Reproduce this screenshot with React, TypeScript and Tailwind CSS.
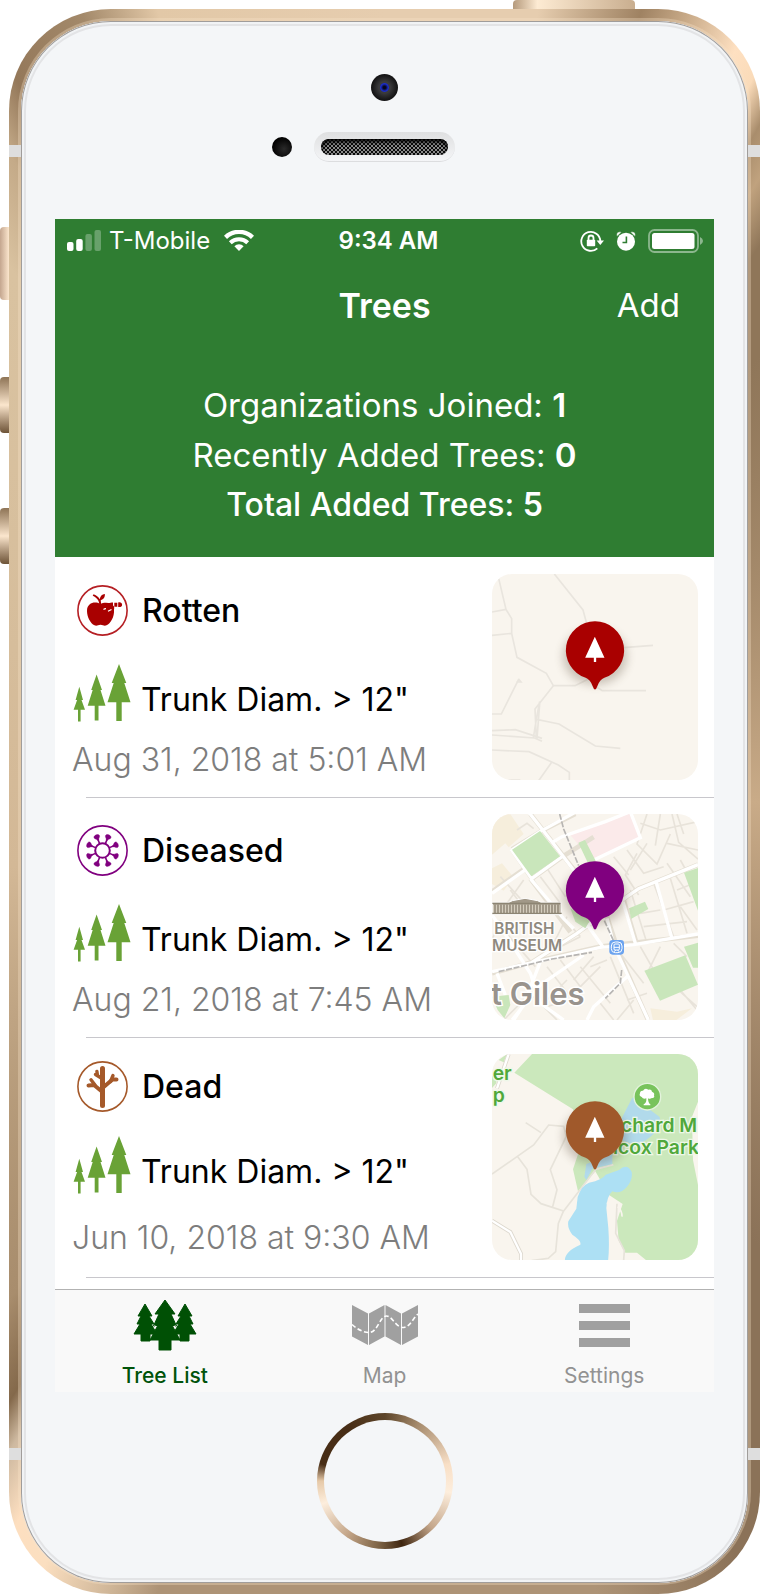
import type { ReactNode } from "react";

type Tree = {
  status: string;
  icon: ReactNode;
  date: string;
  color: string;
  map: ReactNode;
  top: string;
  trunkGap: string;
  dateGap: string;
};

const GREEN = "#69a236";

/* ---------- row icons ---------- */

function RottenIcon() {
  return (
    <svg viewBox="0 0 51 51" className="size-[51px]" fill="#a90000" aria-hidden="true">
      <circle cx="25.5" cy="25.5" r="24.6" fill="#fff" stroke="#b51f24" strokeWidth="1.6" />
      <path d="M23 19C18.500 16 10 17.500 10 26c0 6 3.500 12.500 7.500 14.300 2.500 1 3.500-.6 6-.6s3.500 1.600 6 .6C33.500 38.500 37.500 32 37 25c0-1 .500-2 0-3.500C35 17.500 28 16.500 23 19z" />
      <path d="M22.200 19.500c0-4-2-6.500-6.500-8.800l.9-1.400c3 1.300 5.300 3 6.100 5 .5-3 2.200-5.100 5.200-5.300.3 3-1.200 5.400-4.200 6.200.3 1.500.4 3 .3 4.300z" />
      <path d="M31 18.500c2-1 3.500-1 5-1v4.700l-4 .5zM37.300 17.700h3v4h-3zM41.200 17.500c2.500-.5 3.900.5 3.900 2.200s-1.400 2.700-3.900 2.300z" />
      <path d="M26.500 24.500q1-.8 2.500-.8M31 26.200l3.500-1.700" fill="none" stroke="#fff" strokeWidth="1.200" />
    </svg>
  );
}

function DiseasedIcon() {
  const arms = [22.5, 67.5, 112.5, 157.5, 202.5, 247.5, 292.5, 337.5];
  return (
    <svg viewBox="0 0 51 51" className="size-[51px]" fill="none" stroke="#80007f" aria-hidden="true">
      <circle cx="25.5" cy="25.5" r="24.6" fill="#fff" strokeWidth="1.6" />
      <circle cx="25.5" cy="25.5" r="7.3" strokeWidth="2" />
      {arms.map((a) => (
        <g key={a} transform={`rotate(${a} 25.5 25.5)`}>
          <path d="M25.500 18v-5" strokeWidth="1.600" />
          <path d="M22.600 10.500c0-2.400 5.800-2.400 5.800 0 0 1.800-1.900 1.900-2.200 3.700h-1.400c-.3-1.800-2.200-1.900-2.200-3.700z" fill="#80007f" strokeWidth=".4" />
        </g>
      ))}
    </svg>
  );
}

function DeadIcon() {
  return (
    <svg viewBox="0 0 51 51" className="size-[51px]" fill="none" stroke="#a5592a" strokeLinecap="round" aria-hidden="true">
      <circle cx="25.5" cy="25.5" r="24.6" fill="#fff" strokeWidth="1.6" />
      <path d="M25.500 44.500V7.500" strokeWidth="5" />
      <path d="M25.500 31l-8.500-7-5.500.5M25.500 27l10-8.500h4" strokeWidth="4" />
      <path d="M18 24l-4-5.200M33.500 20.500l2.500-6M25 17.500l-6.500-4M20.500 14.500l-.6-4" strokeWidth="3.400" />
    </svg>
  );
}

function TrunksIcon() {
  return (
    <svg viewBox="0 0 58 58" className="h-[58px] w-[58px]" fill={GREEN} aria-hidden="true">
      <path d="M6.300 22.700L10 36H8.500l3.500 9.700H7.600V57.500H5V45.700H.6L4.100 36H2.600z" />
      <path d="M23.600 10.500L29 26h-1.500l5 15.700h-7V56.500h-3.800V41.700h-7l5-15.700h-1.500z" />
      <path d="M46 0l7.300 19h-2l6.200 19.200h-8.800V57h-5.400V38.200h-8.800L40.700 19h-2z" />
    </svg>
  );
}

/* ---------- maps ---------- */

function Pin({ color }: { color: string }) {
  return (
    <g>
      <ellipse cx="344" cy="290" rx="96" ry="84" fill="#4b3a28" opacity=".28" filter="url(#soft)" />
      <path d="M344 184a87 87 0 0 1 28 169.500q-14 6-21 25-7 20-14 0-7-19-21-25A87 87 0 0 1 344 184z" fill={color} />
      <path d="M343.500 230l29 63h-25v13h-7v-13h-26z" fill="#fff" />
    </g>
  );
}

function MapTile({ color, label, children }: { color: string; label: string; children: ReactNode }) {
  return (
    <svg viewBox="35 42 618 618" role="img" aria-label={label} className="size-[206px] shrink-0 rounded-[20px] bg-[#f9f5ee]">
      <defs>
        <filter id="soft" x="-30%" y="-30%" width="160%" height="160%">
          <feGaussianBlur stdDeviation="14" />
        </filter>
      </defs>
      {children}
      <Pin color={color} />
    </svg>
  );
}

const ruralMap = (
  <g fill="none" stroke="#e9e5de" strokeWidth="5">
    <path d="M55 55l22 93 17 28v44l16 72 88 48 21 37h65l60-30M35 156l42-8M35 226l59-6M222 42l86 108 12 44M400 265l118-9M344 378l22 14h131" />
    <path d="M35 462h28l52-104M108 366l14 0-8-10M219 377l-55 70 4 90M178 424l-10 54 68 14 109 66 75 7M178 430l-8 106M168 478l-9 56" />
    <path d="M35 512l70-3 80 26M35 525l128 9 22 10M35 570l111 5 88 40 33 22v26M213 608l-38 54M85 660h35" />
  </g>
);

const londonMap = (
  <g>
    <path d="M35 42h55l40 60-45 40-10-12-40 34zM35 205l30-15 35 42-30 40-35-20z" fill="#f6eedc" />
    <path d="M270 105l178-65 30 76-144 66z" fill="#fbeaea" />
    <path d="M510 625l80 10 45-10-60 45h-55z" fill="#f6eedc" />
    <g fill="none" stroke="#e8e3da" strokeWidth="5">
      <path d="M110 90l30-20 20 16M500 42l-30 90 60 60 40-90M540 42l-15 95M575 42l20 85 58 50M480 70l60 20 113-25M560 130l93 20M590 42l20 60M470 160l-35 65 40 60M440 150l50 70 60-20M500 130l-50 80M560 190l70 100M600 180l50 90" />
      <path d="M520 250l60 160M570 235l50 165M590 270l63-25M400 170l45 55M380 195l40 60M450 270l50 160M480 340l60-10M490 380l130-15M600 320l50 70M550 330l90-25" />
      <path d="M180 230l60 80M200 205l55 85M130 240l-50 70M60 230l100 110M90 270l30 40M210 310l90 100M260 350l-50 100M35 350l130 150M60 360l-25 60M240 440l60-30" />
      <path d="M200 500l70 90M240 480l60 80 60-60M300 500l90 110M340 470l-60 70M260 540l-60 60M390 470l70 170M420 460l70 90M480 440l40 70M360 610l40 50M460 600l-50 60M500 580l-60 20M130 600l-60 60M160 590l70 70M200 620l60-20M330 500l50-20M540 440l-40 80M580 430l40 40M560 540l90 80M600 570l50 60" />
    </g>
    <g fill="none" stroke="#e5dfd3" strokeWidth="14">
      <path d="M150 42l65 83 75 95M95 148l90-56 100-50M95 148l60 88 90-65 95-60M35 275l120-85" />
      <path d="M35 520l125-35 200-45 293-33M150 490l140-90 150-110 35-24 178-72M150 236l120 160M380 350l38 115 85 195M430 300l40 135" />
    </g>
    <g fill="none" stroke="#fff" strokeWidth="10">
      <path d="M140 30l75 95 80 105M95 150l85-56 110-60M92 148l62 88 90-65M215 128l30-18 130-45 75-30 30 78-138 66M35 280l120-85" />
      <path d="M35 515l125-28 200-45 100-8 193-32M150 490l140-90 150-110 35-24 178-72M150 236l100 120 30 30M380 355l20 80 104 225M428 305l38 128M528 248l46 164M325 380l45 64M35 345l35 50 80 125 30 90 70 50M50 520l25 65M180 485l-50 130-30 45M320 660l20-40 100-90M310 465l-130 90-85 105" />
    </g>
    <path d="M238 42l12 45 45 110M55 515l160-38 120-20M372 362l30 65M424 510l-4 40-45 45" fill="none" stroke="#b7b5b3" strokeWidth="5" strokeDasharray="18 5" />
    <g fill="#c9e6bb">
      <path d="M95 149l84-56 60 76-86 60zM294 128l20-8 32 62-20 14zM270 325l60 35-15 25-30-20zM446 325l48-20 10 22-52 30zM611 218l42-14v128zM492 512l123-46 38 88-114 48zM611 440l42-12v75h-15zM35 590l50-5 5 30-18 40-20-25z" />
    </g>
    <g stroke="#fff" strokeWidth="3">
      <path d="M36 307h50l10-5 38-7 38 7 10 5h60v37H36z" fill="#a19888" />
    </g>
    <path d="M36 310h204M36 340h208" stroke="#8c8472" strokeWidth="4" />
    <path d="M38 326h200" stroke="#d4cdbd" strokeWidth="24" strokeDasharray="3 6" />
    <g fontFamily="Inter, sans-serif" fill="#8f8a7f" stroke="#fff" paintOrder="stroke">
      <g fontSize="46" fontWeight="600" strokeWidth="8">
        <text x="42" y="401">BRITISH</text>
        <text x="35" y="453">MUSEUM</text>
      </g>
      <text x="32" y="615" fontSize="93" fontWeight="600" strokeWidth="9" fill="#99938d">t Giles</text>
    </g>
    <rect x="387" y="420" width="44" height="44" rx="10" fill="#6ba3ef" />
    <rect x="393" y="426" width="32" height="32" rx="12" fill="none" stroke="#fff" strokeWidth="3" />
    <rect x="401" y="432" width="16" height="18" rx="3" fill="none" stroke="#fff" strokeWidth="3" />
    <path d="M401 442h16M402 455l4-5M416 455l-4-5" stroke="#fff" strokeWidth="3" />
  </g>
);

const parkMap = (
  <g>
    <path d="M157 40L102 98l176 110 20 120-20 60 15 66 52-60 40 70 42 28-17 50 5 60 20 36h35l34 28h152V450l-18-90-3-130 18-45V40zM35 110l15-20-2 40-13 14zM55 60l25-18-10 25z" fill="#cbe8bc" />
    <g fill="none" stroke="#e7e3da" strokeWidth="5">
      <path d="M35 402l75-52 50-35 45-60 45 4 8 30-48 100 20 60-14 55M112 350l28 38 12 75 30 28 68 22 100-130M136 248l46 30M250 512l-16 38-8 85-22 20-50 7M345 388l54-14M410 490l-4 90 26 52-2 28" />
    </g>
    <path d="M35 542l55 34 32 65v21M85 42L50 145" fill="none" stroke="#ddd8ce" strokeWidth="12" />
    <path d="M35 542l55 34 32 65v21M85 42L50 145" fill="none" stroke="#fff" strokeWidth="7" />
    <path d="M455 175q20-15 35 20l48 36q10 40-55 78-30 6-60-8l-2-60zM318 372l78-30v30l-60 14-18 34-6-10z" fill="#b1daeb" />
    <path d="M326 428q40-8 50-24l40-14q25-22 38 6 4 22-14 44-20 24-44 14-16 14-18 50l6 60q4 60-1 100H254q-4-28 46-50 4-12-24-30-16-20-12-40l24-38 4-35q12-35 34-43z" fill="#ade0f4" />
    <path d="M412 500q14 14 13 30M379 490l38-2" stroke="#f9f5ee" strokeWidth="5" fill="none" />
    <g fontFamily="Inter, sans-serif" fontSize="58" fontWeight="600" fill="#50a83b" stroke="#eef8e8" strokeWidth="8" paintOrder="stroke">
      <text x="37" y="121">er</text>
      <text x="37" y="185">p</text>
      <text x="422" y="276">chard M</text>
      <text x="398" y="342">lcox Park</text>
    </g>
    <circle cx="501" cy="170" r="40" fill="#78c35c" stroke="#e3f3dc" strokeWidth="4" />
    <path d="M490 193q9-3 8-18-10 3-14-4-9-3-5-11 0-9 9-8 6-10 16-3 10-2 11 6 9 4 6 11 4 9-9 9-4 3-9 0 0 14 7 18v3h-20z" fill="#fff" />
  </g>
);

/* ---------- data ---------- */

const trees: Tree[] = [
  {
    status: "Rotten",
    icon: <RottenIcon />,
    date: "Aug 31, 2018 at 5:01 AM",
    color: "#a90000",
    map: ruralMap,
    top: "pt-[27px]",
    trunkGap: "mt-7",
    dateGap: "mt-[18px]",
  },
  {
    status: "Diseased",
    icon: <DiseasedIcon />,
    date: "Aug 21, 2018 at 7:45 AM",
    color: "#80007f",
    map: londonMap,
    top: "pt-[27px]",
    trunkGap: "mt-7",
    dateGap: "mt-[18px]",
  },
  {
    status: "Dead",
    icon: <DeadIcon />,
    date: "Jun 10, 2018 at 9:30 AM",
    color: "#a0592b",
    map: parkMap,
    top: "pt-[23px]",
    trunkGap: "mt-6",
    dateGap: "mt-6",
  },
];

const stats = [
  { label: "Organizations Joined:", value: 1, style: "text-[33px] font-normal" },
  { label: "Recently Added Trees:", value: 0, style: "text-[33px] font-normal" },
  { label: "Total Added Trees:", value: 5, style: "text-[32px] font-medium" },
];

/* ---------- screen parts ---------- */

function StatusBar() {
  return (
    <div className="grid h-[43px] grid-cols-[1fr_auto_1fr] items-center pr-[10px] pl-3 text-2xl">
      <div className="flex items-center gap-2">
        <svg viewBox="0 0 34 21" className="h-[21px] w-[34px]" fill="#fff" aria-hidden="true">
          <rect y="12" width="6.500" height="9" rx="2" />
          <rect x="9.200" y="9" width="6.500" height="12" rx="2" />
          <rect x="18.400" y="4" width="6.500" height="17" rx="2" opacity=".28" />
          <rect x="27.500" width="6.500" height="21" rx="2" opacity=".28" />
        </svg>
        <span>T-Mobile</span>
        <svg viewBox="0 0 30 21" className="ml-1.5 h-[21px] w-[30px]" fill="none" stroke="#fff" aria-hidden="true">
          <path d="M1.500 7.300a19.500 19.500 0 0 1 27 0" strokeWidth="4.400" />
          <path d="M6.300 12.800a12.500 12.500 0 0 1 17.400 0" strokeWidth="4" />
          <path d="M15 21l-4.600-4.800a6.500 6.500 0 0 1 9.200 0z" fill="#fff" stroke="none" />
        </svg>
      </div>
      <time className="pl-1.5 font-semibold">9:34 AM</time>
      <div className="flex items-center justify-end">
        <svg viewBox="0 0 24 22" className="h-[22px] w-6" fill="none" stroke="#fff" strokeWidth="1.800" aria-hidden="true">
          <path d="M20.300 11a9.500 9.500 0 1 0-3 7.300" />
          <path d="M16.600 10.500h7.400l-3.700 4.500z" fill="#fff" stroke="none" />
          <rect x="6.800" y="9.800" width="8.400" height="6.400" rx=".8" fill="#fff" stroke="none" />
          <path d="M8.500 10V8a2.500 2.500 0 0 1 5 0v2" />
        </svg>
        <svg viewBox="0 0 20 20" className="ml-3 size-5" fill="#fff" aria-hidden="true">
          <circle cx="10" cy="10.700" r="9" />
          <path d="M1 5.500C-.5 2 2.500-.2 5.500 1.300zM19 5.500c1.500-3.500-1.500-5.700-4.500-4.200z" stroke="#2f7d32" strokeWidth=".6" />
          <path d="M10.400 5.500v6H6.500" stroke="#2f7d32" strokeWidth="1.600" fill="none" />
        </svg>
        <svg viewBox="0 0 56 24" className="ml-3 h-6 w-14" fill="#fff" aria-hidden="true">
          <rect x="1" y="1" width="49" height="22" rx="5.500" fill="none" stroke="#fff" strokeWidth="1.800" opacity=".45" />
          <rect x="4" y="4" width="42.500" height="16" rx="2.500" />
          <path d="M52 8q3 1.500 3 4t-3 4z" opacity=".45" />
        </svg>
      </div>
    </div>
  );
}

function Header() {
  return (
    <header className="bg-[#2f7d32] pb-[27px] text-white">
      <StatusBar />
      <div className="grid h-[87px] grid-cols-3 items-center px-[34px]">
        <h1 className="col-start-2 text-center text-[34px] font-semibold">Trees</h1>
        <button type="button" className="justify-self-end text-[33px]">
          Add
        </button>
      </div>
      <div className="pt-[31px] text-center leading-[50px]">
        {stats.map((s) => (
          <p key={s.label} className={s.style}>
            {s.label} <b className="font-semibold">{s.value}</b>
          </p>
        ))}
      </div>
    </header>
  );
}

function TreeRow({ tree }: { tree: Tree }) {
  return (
    <li>
      <div className="flex h-[239px] justify-between pr-4 pl-[17px]">
        <div className={tree.top}>
          <div className="flex items-center gap-3.5 pl-[5px]">
            {tree.icon}
            <h2 className="text-[32px] leading-10 font-medium">{tree.status}</h2>
          </div>
          <div className={`flex items-center gap-2.5 pl-px ${tree.trunkGap}`}>
            <TrunksIcon />
            <p className="pt-3.5 text-[32px] leading-10">Trunk Diam. &gt; 12"</p>
          </div>
          <p className={`text-[32px] leading-10 font-light text-[#7d7d7d] ${tree.dateGap}`}>{tree.date}</p>
        </div>
        <div className="pt-4">
          <MapTile color={tree.color} label={`${tree.status} tree location`}>
            {tree.map}
          </MapTile>
        </div>
      </div>
      <hr className="ml-[31px] border-[#c8c7cc]" />
    </li>
  );
}

function TabBar() {
  const tab = "flex flex-1 flex-col items-center text-[21px] leading-8";
  return (
    <nav className="flex border-t border-[#b2b2b2] bg-[#f9f9f9] text-[#929292]">
      <button type="button" className={`${tab} font-medium text-[#00530a]`}>
        <span className="flex h-[70px] items-center">
          <svg viewBox="0 0 64 52" className="h-[52px] w-16" fill="#005005" stroke="#005005" strokeLinejoin="round" aria-hidden="true">
            <path d="M12 5l7 12h-3l5 8h-3l6 10h-7v7H8v-7H1l6-10H4l4-8H5zM52 5l7 12h-3l4 8h-3l6 10h-7v7h-9v-7h-7l6-10h-3l5-8h-3z" />
            <path d="M32 1l10 14h-4l5.500 12h-4L47 41h-9v10H26V41h-9l7.500-14h-4L26 15h-4z" />
            <path d="M21 26l1.500 2.500 1.500-1zM43 26l-1.500 2.500-1.500-1z" fill="#f9f9f9" stroke="none" />
          </svg>
        </span>
        Tree List
      </button>
      <button type="button" className={tab}>
        <span className="flex h-[70px] items-center">
          <svg viewBox="0 0 66 40" className="h-10 w-[66px]" fill="#a0a0a0" aria-hidden="true">
            <path d="M0 0l16 8.500V40L0 31.500zM17 8.500L32.500 0v31.500L17 40zM33.500 0L49 8.500V40l-15.500-8.500zM50 8.500L66 0v31.500L50 40z" />
            <path d="M0 19.500C6 25 13 28 18 27.500 26 26 28 11 34.500 11c6 0 9 12 17.500 11.500 6-1 9-9 14-13.500" fill="none" stroke="#fff" strokeWidth="1.600" strokeDasharray="4.500 2.500" />
          </svg>
        </span>
        Map
      </button>
      <button type="button" className={tab}>
        <span className="flex h-[70px] flex-col items-center justify-center gap-2">
          <span className="h-[9px] w-[51px] bg-[#a0a0a0]" />
          <span className="h-[9px] w-[51px] bg-[#a0a0a0]" />
          <span className="h-[9px] w-[51px] bg-[#a0a0a0]" />
        </span>
        Settings
      </button>
    </nav>
  );
}

/* ---------- phone ---------- */

function SideButtons() {
  return (
    <>
      <span className="absolute top-0 right-[125px] h-[9px] w-[122px] rounded-t bg-linear-to-r from-[#b59a7c] via-[#fdebd3] to-[#c9ae8f] via-20%" />
      <span className="absolute top-[227px] left-0 h-[73px] w-[9px] rounded-l bg-linear-to-r from-[#c4a68f] to-[#fbe6cd]" />
      <span className="absolute top-[377px] left-0 h-[56px] w-[9px] rounded-l bg-linear-to-b from-[#8e7456] via-[#fbe6cd] to-[#6e5438]" />
      <span className="absolute top-[508px] left-0 h-[56px] w-[9px] rounded-l bg-linear-to-b from-[#8e7456] via-[#fbe6cd] to-[#6e5438]" />
    </>
  );
}

function AntennaBands() {
  return (
    <>
      <span className="absolute top-[136px] left-0 h-3 w-3 bg-[#dedede]" />
      <span className="absolute top-[136px] right-0 h-3 w-3 bg-[#dedede]" />
      <span className="absolute bottom-[134px] left-0 h-3 w-3 bg-[#dedede]" />
      <span className="absolute right-0 bottom-[134px] h-3 w-3 bg-[#dedede]" />
    </>
  );
}

function Bezel() {
  return (
    <div className="flex h-[198px] flex-col items-center pt-[53px]">
      <span className="flex size-[27px] items-center justify-center rounded-full bg-[radial-gradient(circle,#3a3a3c_30%,#161617_65%)]">
        <span className="size-[9px] rounded-full bg-[radial-gradient(circle,#05051c_20%,#1c2fd0_60%,#101a6a)]" />
      </span>
      <div className="mt-[31px] grid w-full grid-cols-[1fr_auto_1fr] items-center">
        <span className="mr-[22px] size-5 justify-self-end rounded-full bg-[radial-gradient(circle_at_60%_60%,#2a2a2a,#000_70%)]" />
        <span className="rounded-full border-b border-[#dcdddf] bg-linear-to-b from-[#dfe0e1] to-[#f4f5f7] px-[7px] pt-[7px] pb-1.5">
          <span className="block h-4 w-[127px] rounded-full bg-[repeating-conic-gradient(#0a0a0a_0_25%,#8a8a8a_0_50%)] bg-size-[4px_4px] shadow-[inset_0_3px_4px_#000]" />
        </span>
      </div>
    </div>
  );
}

export default function App() {
  return (
    <div className="relative bg-white pt-[9px] pl-[9px] font-[Inter,'Liberation_Sans',sans-serif] text-black">
      <SideButtons />
      <div className="relative rounded-[102px] bg-[conic-gradient(#e6cdaf_0deg,#e6cdaf_11deg,#9f8262_18deg,#c7a987_21deg,#fee0c1_25deg,#fadbb9_27deg,#a98d6c_29deg,#c0a27e_31deg,#8f7659_34deg,#8f7659_40deg,#c9ab88_90deg,#8b7258_140deg,#8b7258_155deg,#ad9376_165deg,#ad9376_196deg,#cdb496_199deg,#fbdfc0_204deg,#fddfc0_207deg,#cdb89f_210deg,#84694b_212deg,#a88d6d_217deg,#d3b896_260deg,#d9c2a0_325deg,#c4aa88_330deg,#94785a_333deg,#a3896a_339deg,#e2c8a7_344deg,#e6cdaf_360deg)] p-[9px]">
        <AntennaBands />
        <div className="rounded-[93px] bg-[#f8e3c855] p-[3px] pb-[2px]">
          <main className="relative rounded-[90px] bg-[#f4f6f8] px-[34px] shadow-[inset_0_0_0_1px_#a09d9b,inset_0_0_0_3px_#f1f3f5,inset_0_0_0_5px_#e3e4e6]">
            <Bezel />
            <div className="overflow-hidden bg-white">
              <Header />
              <ul className="pt-px pb-[11px]">
                {trees.map((t) => (
                  <TreeRow key={t.date} tree={t} />
                ))}
              </ul>
              <TabBar />
            </div>
            <div className="flex h-[191px] justify-center pt-[21px]">
              <button
                type="button"
                aria-label="Home"
                className="size-[136px] rounded-full bg-[conic-gradient(#5d452a,#a58a6c_30deg,#f8dfc6_75deg,#fdeedd_100deg,#c4a68a_135deg,#3f2610_165deg,#7c6244_185deg,#c3a588_215deg,#fdeedd_250deg,#e6c9a8_270deg,#472d16_285deg,#472d16_325deg,#5d452a)] p-[7px]"
              >
                <span className="block size-full rounded-full bg-[#f4f6f8]" />
              </button>
            </div>
          </main>
        </div>
      </div>
    </div>
  );
}
